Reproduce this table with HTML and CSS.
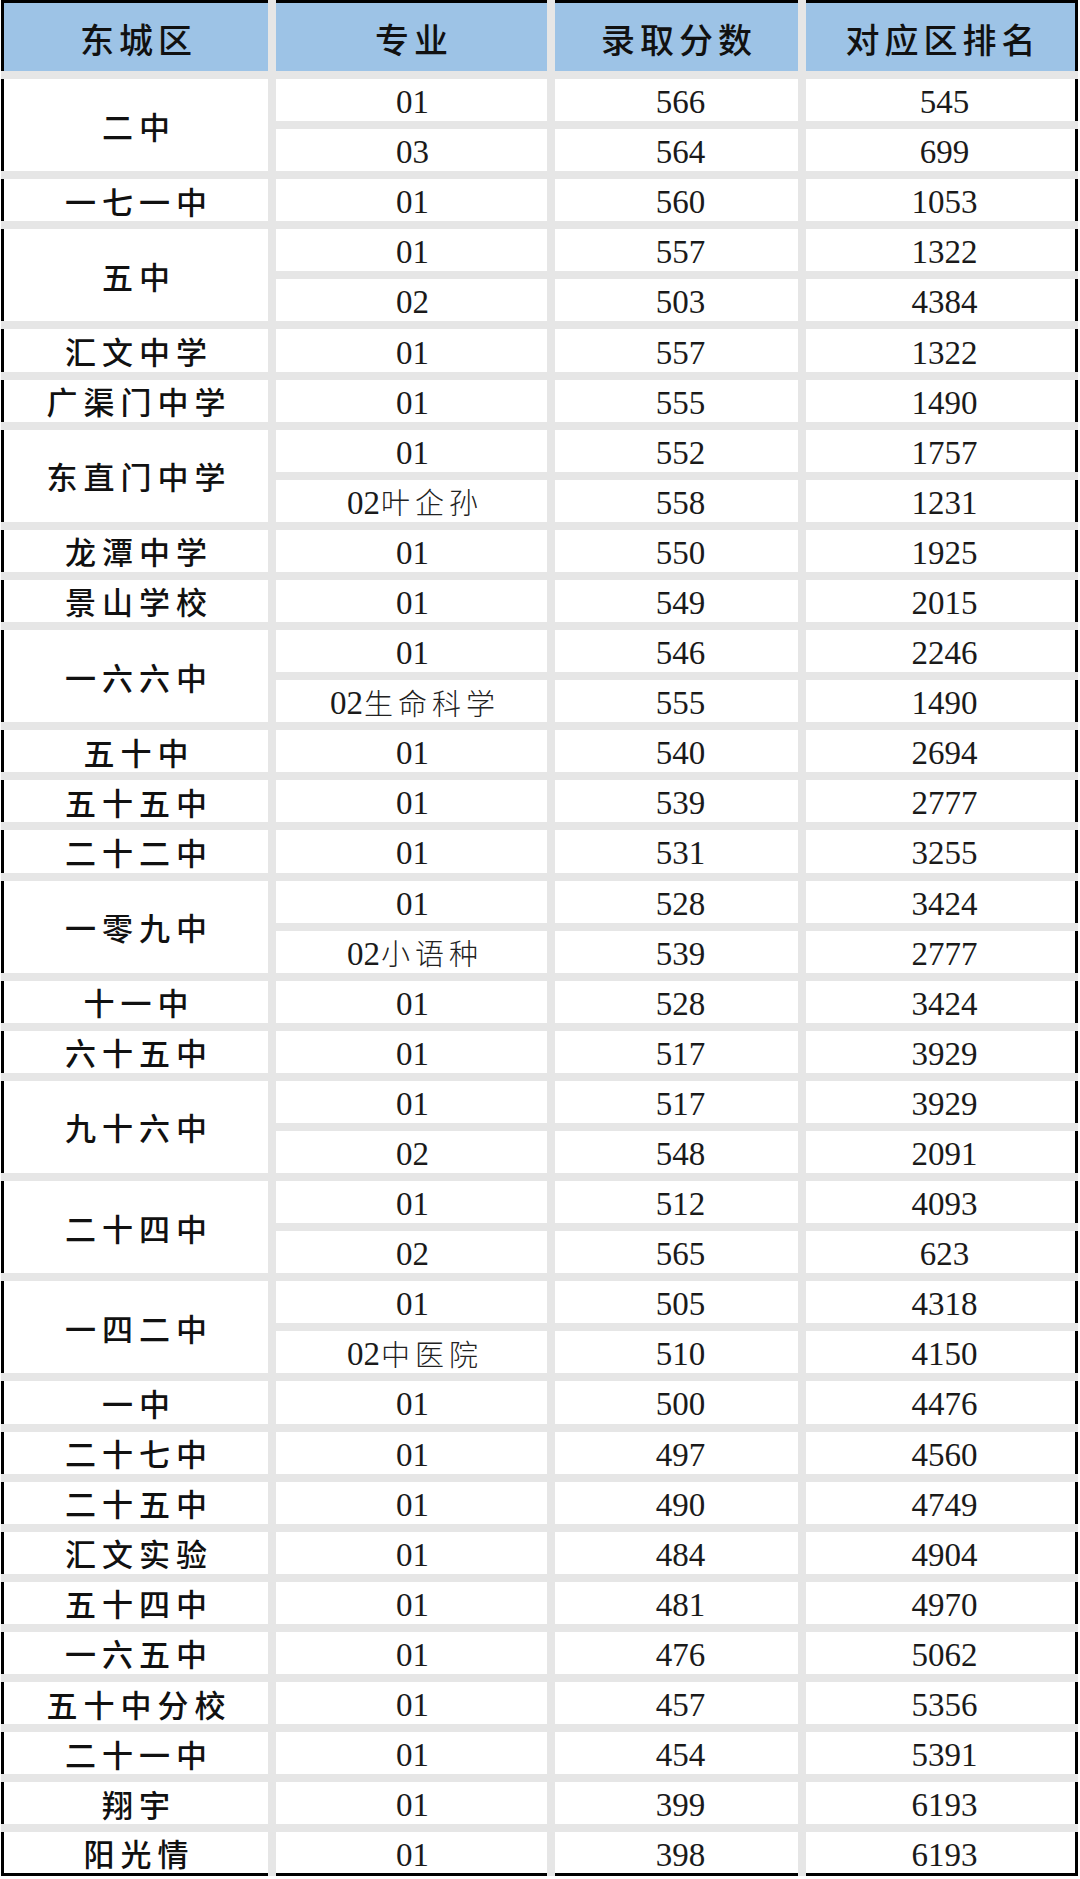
FILE: index.html
```html
<!DOCTYPE html>
<html lang="zh-CN">
<head>
<meta charset="utf-8">
<title>东城区录取分数</title>
<link rel="stylesheet" href="styles.css">
</head>
<body>
<div class="sheet">
  <div class="cell head c1">东城区</div>
  <div class="cell head">专业</div>
  <div class="cell head">录取分数</div>
  <div class="cell head c4">对应区排名</div>

  <div class="cell name c1 span2">二中</div>
  <div class="cell c2">01</div><div class="cell c3">566</div><div class="cell c4">545</div>
  <div class="cell c2">03</div><div class="cell c3">564</div><div class="cell c4">699</div>

  <div class="cell name c1">一七一中</div>
  <div class="cell c2">01</div><div class="cell c3">560</div><div class="cell c4">1053</div>

  <div class="cell name c1 span2">五中</div>
  <div class="cell c2">01</div><div class="cell c3">557</div><div class="cell c4">1322</div>
  <div class="cell c2">02</div><div class="cell c3">503</div><div class="cell c4">4384</div>

  <div class="cell name c1">汇文中学</div>
  <div class="cell c2">01</div><div class="cell c3">557</div><div class="cell c4">1322</div>

  <div class="cell name c1">广渠门中学</div>
  <div class="cell c2">01</div><div class="cell c3">555</div><div class="cell c4">1490</div>

  <div class="cell name c1 span2">东直门中学</div>
  <div class="cell c2">01</div><div class="cell c3">552</div><div class="cell c4">1757</div>
  <div class="cell c2">02<span class="cjk">叶企孙</span></div><div class="cell c3">558</div><div class="cell c4">1231</div>

  <div class="cell name c1">龙潭中学</div>
  <div class="cell c2">01</div><div class="cell c3">550</div><div class="cell c4">1925</div>

  <div class="cell name c1">景山学校</div>
  <div class="cell c2">01</div><div class="cell c3">549</div><div class="cell c4">2015</div>

  <div class="cell name c1 span2">一六六中</div>
  <div class="cell c2">01</div><div class="cell c3">546</div><div class="cell c4">2246</div>
  <div class="cell c2">02<span class="cjk">生命科学</span></div><div class="cell c3">555</div><div class="cell c4">1490</div>

  <div class="cell name c1">五十中</div>
  <div class="cell c2">01</div><div class="cell c3">540</div><div class="cell c4">2694</div>

  <div class="cell name c1">五十五中</div>
  <div class="cell c2">01</div><div class="cell c3">539</div><div class="cell c4">2777</div>

  <div class="cell name c1">二十二中</div>
  <div class="cell c2">01</div><div class="cell c3">531</div><div class="cell c4">3255</div>

  <div class="cell name c1 span2">一零九中</div>
  <div class="cell c2">01</div><div class="cell c3">528</div><div class="cell c4">3424</div>
  <div class="cell c2">02<span class="cjk">小语种</span></div><div class="cell c3">539</div><div class="cell c4">2777</div>

  <div class="cell name c1">十一中</div>
  <div class="cell c2">01</div><div class="cell c3">528</div><div class="cell c4">3424</div>

  <div class="cell name c1">六十五中</div>
  <div class="cell c2">01</div><div class="cell c3">517</div><div class="cell c4">3929</div>

  <div class="cell name c1 span2">九十六中</div>
  <div class="cell c2">01</div><div class="cell c3">517</div><div class="cell c4">3929</div>
  <div class="cell c2">02</div><div class="cell c3">548</div><div class="cell c4">2091</div>

  <div class="cell name c1 span2">二十四中</div>
  <div class="cell c2">01</div><div class="cell c3">512</div><div class="cell c4">4093</div>
  <div class="cell c2">02</div><div class="cell c3">565</div><div class="cell c4">623</div>

  <div class="cell name c1 span2">一四二中</div>
  <div class="cell c2">01</div><div class="cell c3">505</div><div class="cell c4">4318</div>
  <div class="cell c2">02<span class="cjk">中医院</span></div><div class="cell c3">510</div><div class="cell c4">4150</div>

  <div class="cell name c1">一中</div>
  <div class="cell c2">01</div><div class="cell c3">500</div><div class="cell c4">4476</div>

  <div class="cell name c1">二十七中</div>
  <div class="cell c2">01</div><div class="cell c3">497</div><div class="cell c4">4560</div>

  <div class="cell name c1">二十五中</div>
  <div class="cell c2">01</div><div class="cell c3">490</div><div class="cell c4">4749</div>

  <div class="cell name c1">汇文实验</div>
  <div class="cell c2">01</div><div class="cell c3">484</div><div class="cell c4">4904</div>

  <div class="cell name c1">五十四中</div>
  <div class="cell c2">01</div><div class="cell c3">481</div><div class="cell c4">4970</div>

  <div class="cell name c1">一六五中</div>
  <div class="cell c2">01</div><div class="cell c3">476</div><div class="cell c4">5062</div>

  <div class="cell name c1">五十中分校</div>
  <div class="cell c2">01</div><div class="cell c3">457</div><div class="cell c4">5356</div>

  <div class="cell name c1">二十一中</div>
  <div class="cell c2">01</div><div class="cell c3">454</div><div class="cell c4">5391</div>

  <div class="cell name c1">翔宇</div>
  <div class="cell c2">01</div><div class="cell c3">399</div><div class="cell c4">6193</div>

  <div class="cell name c1 last">阳光情</div>
  <div class="cell c2 last">01</div><div class="cell c3 last">398</div><div class="cell c4 last">6193</div>
</div>
</body>
</html>
```

FILE: styles.css
```css
html, body {
  margin: 0;
  padding: 0;
  background: #ffffff;
}

.sheet {
  margin-left: 1px;
  width: 1077px;
  display: grid;
  grid-template-columns: 267px 271px 243px 272px;
  grid-template-rows: 71px repeat(35, 42.1px) 44px;
  gap: 8px;
  background: #e6e6e6;
  font-family: "Liberation Serif", "Noto Sans CJK SC", serif;
  color: #1a1a1a;
}

.cell {
  box-sizing: border-box;
  background: #ffffff;
  display: flex;
  align-items: center;
  justify-content: center;
  font-size: 33px;
  line-height: 1;
  padding-top: 5px;
  white-space: nowrap;
}

.c2 {
  padding-left: 2px;
}

.c3 {
  padding-left: 8px;
}

.cjk {
  font-family: "Noto Sans CJK SC", sans-serif;
  font-weight: 300;
  font-size: 29px;
  letter-spacing: 5px;
  margin-left: 1px;
  margin-right: -5px;
  margin-top: -3px;
  color: #222;
}

.head {
  background: #9dc3e6;
  border-top: 3px solid #000;
  font-family: "Noto Sans CJK SC", sans-serif;
  font-weight: 500;
  font-size: 34px;
  letter-spacing: 5px;
  text-indent: 5px;
  padding-top: 4px;
  padding-left: 0;
  color: #111;
}

.name {
  font-family: "Noto Sans CJK SC", sans-serif;
  font-weight: 500;
  font-size: 31px;
  letter-spacing: 6px;
  text-indent: 6px;
  padding-top: 0;
  color: #111;
}

.span2 {
  grid-row: span 2;
}

.c1 {
  border-left: 3px solid #000;
}

.c4 {
  border-right: 3px solid #000;
  padding-left: 8px;
}

.head.c4 {
  padding-left: 0;
}

.last {
  border-bottom: 3px solid #000;
}
```
